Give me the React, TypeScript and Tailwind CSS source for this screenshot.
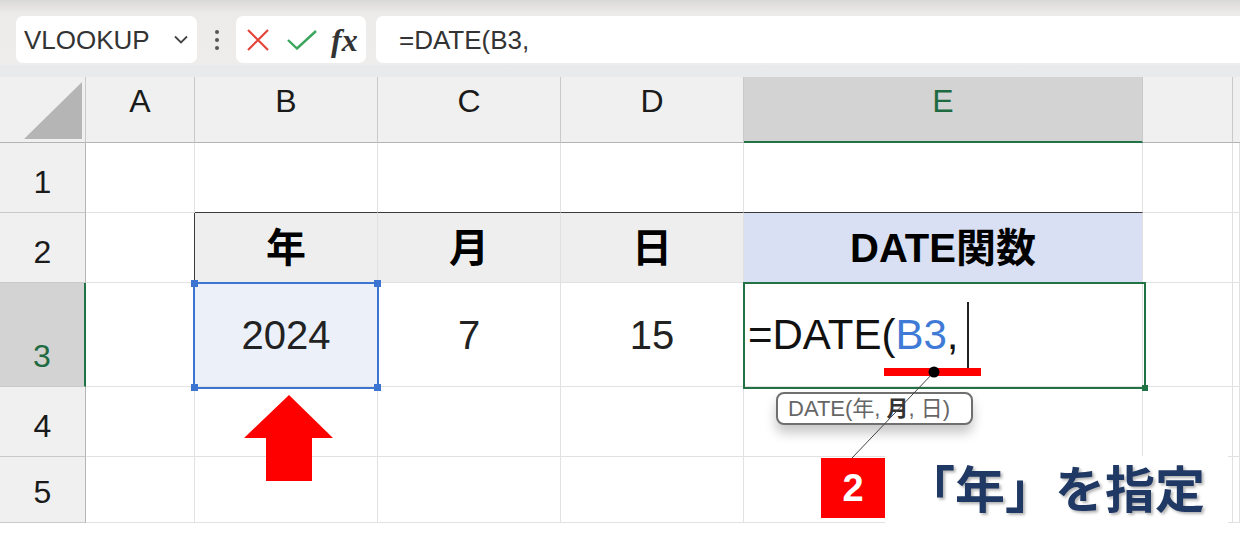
import React from "react";

const GRID = "border-[#e1e1e1]";
const DARK = "border-[#3a3a3a]";

function ColHead({ label, active, last }: { label: string; active?: boolean; last?: boolean }) {
  return (
    <div
      className={`flex items-center justify-center pb-[17px] text-[32px] leading-none ${
        active
          ? "bg-[#d3d3d3] text-[#1e6b41] border-b-2 border-b-[#217346]"
          : "bg-[#f0f0f0] text-[#1a1a1a] border-b border-b-[#b4b4b4]"
      } ${last ? "" : "border-r border-r-[#c9c9c9]"}`}
    >
      {label}
    </div>
  );
}

function RowHead({ label, active }: { label: string; active?: boolean }) {
  return (
    <div
      className={`flex items-end justify-center pb-[14px] text-[32px] leading-none border-b border-b-[#c9c9c9] ${
        active
          ? "bg-[#d3d3d3] text-[#1e6b41] border-r-2 border-r-[#217346]"
          : "bg-[#f0f0f0] text-[#1a1a1a] border-r border-r-[#b4b4b4]"
      }`}
    >
      {label}
    </div>
  );
}

function Cell({ className = "", children }: { className?: string; children?: React.ReactNode }) {
  return (
    <div className={`flex items-center justify-center border-r border-b ${GRID} ${className}`}>
      {children}
    </div>
  );
}

export default function App() {
  return (
    <div className="relative w-[1240px] h-[554px] overflow-hidden bg-white font-['Liberation_Sans','Noto_Sans_CJK_JP',sans-serif]">
      {/* toolbar */}
      <div className="flex h-[65px] items-start pt-[16px] bg-[linear-gradient(to_bottom,#d9d9d9,#edebe9_14px,#efedeb)]">
        <div className="ml-[16px] flex h-[47px] w-[181px] items-center justify-between rounded-[7px] bg-white pl-[8px] pr-[9px]">
          <span className="text-[26px] leading-none text-[#333]">VLOOKUP</span>
          <svg width="14" height="9" viewBox="0 0 14 9">
            <path d="M1 1.5 L7 7.5 L13 1.5" fill="none" stroke="#444" strokeWidth="1.8" />
          </svg>
        </div>
        <div className="flex h-[47px] w-[39px] flex-col items-center justify-center gap-[4px]">
          <span className="h-[4px] w-[4px] rounded-full bg-[#555]" />
          <span className="h-[4px] w-[4px] rounded-full bg-[#555]" />
          <span className="h-[4px] w-[4px] rounded-full bg-[#555]" />
        </div>
        <div className="flex h-[47px] w-[130px] items-center gap-[18px] rounded-[7px] bg-white pl-[11px]">
          <svg width="22" height="22" viewBox="0 0 22 22">
            <path d="M1 1 L21 21 M21 1 L1 21" stroke="#e5453b" strokeWidth="2.2" />
          </svg>
          <svg width="30" height="20" viewBox="0 0 30 20">
            <polyline points="1,10 10,18.5 29,1" fill="none" stroke="#3ba55c" strokeWidth="2.4" />
          </svg>
          <span className="-ml-[4px] font-['Liberation_Serif',serif] text-[32px] font-bold italic leading-none text-[#333]">
            fx
          </span>
        </div>
        <div className="ml-[10px] flex h-[47px] flex-1 items-center rounded-l-[7px] bg-white pl-[23px]">
          <span className="text-[26px] leading-none text-[#333]">=DATE(B3,</span>
        </div>
      </div>
      <div className="h-[12px] bg-[#e9eaeb]" />

      {/* sheet */}
      <div className="grid grid-cols-[86px_109px_183px_183px_183px_399px_90px_1fr] grid-rows-[66px_70px_70px_104px_70px_66px]">
        <div className="flex items-end justify-end border-r border-b border-r-[#c9c9c9] border-b-[#b4b4b4] bg-[#f0f0f0] pr-[3px] pb-[3px]">
          <svg width="58" height="57" viewBox="0 0 58 57">
            <polygon points="0,57 58,57 58,0" fill="#b5b5b5" />
          </svg>
        </div>
        <ColHead label="A" />
        <ColHead label="B" />
        <ColHead label="C" />
        <ColHead label="D" />
        <ColHead label="E" active />
        <ColHead label="" />
        <ColHead label="" last />

        {/* row 1 */}
        <RowHead label="1" />
        <Cell />
        <Cell className="border-b-[#3a3a3a]" />
        <Cell className="border-b-[#3a3a3a]" />
        <Cell className="border-b-[#3a3a3a]" />
        <Cell className="border-b-[#3a3a3a]" />
        <Cell />
        <Cell />

        {/* row 2 */}
        <RowHead label="2" />
        <Cell className="border-r-[#3a3a3a]" />
        <Cell className={`${DARK} bg-[#eeeeee] text-[40px] font-bold text-black`}>年</Cell>
        <Cell className={`${DARK} bg-[#eeeeee] text-[40px] font-bold text-black`}>月</Cell>
        <Cell className={`${DARK} bg-[#eeeeee] text-[40px] font-bold text-black`}>日</Cell>
        <Cell className={`${DARK} bg-[#d9e0f3] text-[40px] font-bold text-black`}>DATE関数</Cell>
        <Cell />
        <Cell />

        {/* row 3 */}
        <RowHead label="3" active />
        <Cell className="border-r-[#3a3a3a]" />
        <Cell className={`${DARK} bg-[#ebf0f9] text-[40px] text-[#222]`}>2024</Cell>
        <Cell className={`${DARK} text-[40px] text-[#222]`}>7</Cell>
        <Cell className={`${DARK} text-[40px] text-[#222]`}>15</Cell>
        <Cell className={`${DARK} !justify-start pl-[4px] text-[42px] text-[#111]`}>
          <span>
            =DATE(<span className="text-[#3f7bd6]">B3</span>,
          </span>
        </Cell>
        <Cell />
        <Cell />

        {/* row 4 */}
        <RowHead label="4" />
        <Cell />
        <Cell />
        <Cell />
        <Cell />
        <Cell />
        <Cell />
        <Cell />

        {/* row 5 */}
        <RowHead label="5" />
        <Cell />
        <Cell />
        <Cell />
        <Cell />
        <Cell />
        <Cell />
        <Cell />
      </div>

      {/* selection of B3 */}
      <div className="absolute left-[193px] top-[282px] h-[107px] w-[186px] border-2 border-[#3c74d2]">
        <span className="absolute -left-[4px] -top-[4px] h-[7px] w-[7px] bg-[#3c74d2]" />
        <span className="absolute -right-[4px] -top-[4px] h-[7px] w-[7px] bg-[#3c74d2]" />
        <span className="absolute -left-[4px] -bottom-[4px] h-[7px] w-[7px] bg-[#3c74d2]" />
        <span className="absolute -right-[4px] -bottom-[4px] h-[7px] w-[7px] bg-[#3c74d2]" />
      </div>

      {/* active cell E3 */}
      <div className="absolute left-[743px] top-[282px] h-[107px] w-[403px] border-2 border-[#217346]">
        <span className="absolute -right-[4px] -bottom-[4px] h-[6px] w-[6px] bg-[#217346]" />
      </div>

      {/* caret and highlight */}
      <div className="absolute left-[967px] top-[302px] h-[67px] w-[2px] bg-[#222]" />
      <div className="absolute left-[884px] top-[368px] h-[8px] w-[97px] bg-[#ff0000]" />

      {/* red arrow */}
      <svg className="absolute left-[240px] top-[390px]" width="100" height="95" viewBox="0 0 100 95">
        <polygon points="49,5 93,48 72,48 72,91 26,91 26,48 4,48" fill="#ff0000" />
      </svg>

      {/* function tooltip */}
      <div className="absolute left-[776px] top-[392px] flex h-[33px] w-[197px] items-center rounded-[8px] border-2 border-[#6f6f6f] bg-white pl-[10px] text-[22px] leading-none text-[#666] shadow-[0_8px_12px_rgba(0,0,0,0.22)]">
        <span className="whitespace-pre">
          DATE(年, <span className="font-bold text-[#333]">月</span>, 日)
        </span>
      </div>

      {/* callout */}
      <div className="absolute left-[885px] top-[456px] h-[70px] w-[343px] bg-white pl-[20px] pt-[5px]">
        <span className="font-['Noto_Sans_CJK_JP',sans-serif] text-[50px] font-bold leading-none text-[#1f3864] [text-shadow:2px_2px_3px_rgba(0,0,0,0.3)]">
          「年」を指定
        </span>
      </div>
      <div className="absolute left-[821px] top-[458px] flex h-[60px] w-[64px] items-center justify-center bg-[#ff0000] text-[38px] font-bold leading-none text-white">
        2
      </div>

      <svg className="pointer-events-none absolute inset-0" width="1240" height="554" viewBox="0 0 1240 554">
        <line x1="934" y1="372" x2="852" y2="458" stroke="#444" strokeWidth="1" />
        <circle cx="934" cy="372" r="5.5" fill="#000" />
      </svg>
    </div>
  );
}
